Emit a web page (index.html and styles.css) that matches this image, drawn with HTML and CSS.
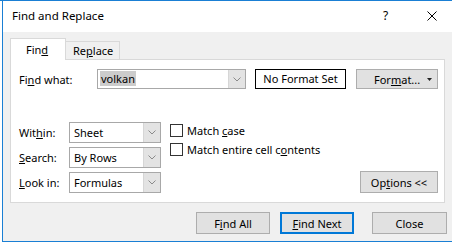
FILE: index.html
```html
<!DOCTYPE html>
<html lang="en">
<head>
  <meta charset="UTF-8">
  <title>Find and Replace</title>
  <link rel="stylesheet" href="styles.css">
</head>
<body>
  <div class="top-edge"></div>
  <div class="window">
    <div class="titlebar">
      <span class="title">Find and Replace</span>
      <span class="help">?</span>
      <svg class="close-x" width="10" height="10" viewBox="0 0 10 10">
        <path d="M0.5 0.5 L9.5 9.5 M9.5 0.5 L0.5 9.5" stroke="#000" stroke-width="1" fill="none"/>
      </svg>
    </div>

    <div class="dialog-body">
      <div class="tabs">
        <div class="tab active">Fin<u>d</u></div>
        <div class="tab">Re<u>p</u>lace</div>
      </div>

      <div class="panel">
        <div class="find-row">
          <span class="find-label">Fi<u>n</u>d what:</span>
          <div class="combo">
            <span class="combo-text"><span class="selected">volkan</span></span>
            <span class="drop">
              <svg width="8" height="5" viewBox="0 0 8 5"><path d="M0.5 0.5 L4 4 L7.5 0.5" stroke="#8a8a8a" fill="none"/></svg>
            </span>
          </div>
          <div class="no-format">No Format Set</div>
          <button type="button" class="btn format-btn">
            <span>For<u>m</u>at...</span>
            <svg class="caret" width="5" height="3" viewBox="0 0 5 3"><path d="M0 0 H5 L2.5 3 Z" fill="#222"/></svg>
          </button>
        </div>

        <div class="options">
          <div class="selects">
            <div class="sel-row">
              <span class="sel-label">Wit<u>h</u>in:</span>
              <div class="select"><span class="select-text">Sheet</span><span class="drop"><svg width="8" height="5" viewBox="0 0 8 5"><path d="M0.5 0.5 L4 4 L7.5 0.5" stroke="#8a8a8a" fill="none"/></svg></span></div>
            </div>
            <div class="sel-row">
              <span class="sel-label"><u>S</u>earch:</span>
              <div class="select"><span class="select-text">By Rows</span><span class="drop"><svg width="8" height="5" viewBox="0 0 8 5"><path d="M0.5 0.5 L4 4 L7.5 0.5" stroke="#8a8a8a" fill="none"/></svg></span></div>
            </div>
            <div class="sel-row">
              <span class="sel-label"><u>L</u>ook in:</span>
              <div class="select"><span class="select-text">Formulas</span><span class="drop"><svg width="8" height="5" viewBox="0 0 8 5"><path d="M0.5 0.5 L4 4 L7.5 0.5" stroke="#8a8a8a" fill="none"/></svg></span></div>
            </div>
          </div>

          <div class="checks">
            <div class="check"><span class="box"></span><span>Match <u>c</u>ase</span></div>
            <div class="check"><span class="box"></span><span>Match entire cell c<u>o</u>ntents</span></div>
          </div>

          <button type="button" class="btn options-btn">Op<u>t</u>ions &lt;&lt;</button>
        </div>
      </div>

      <div class="actions">
        <button type="button" class="btn find-all">F<u>i</u>nd All</button>
        <button type="button" class="btn find-next"><u>F</u>ind Next</button>
        <button type="button" class="btn close-btn">Close</button>
      </div>
    </div>
  </div>
</body>
</html>
```

FILE: styles.css
```css
* {
  margin: 0;
  padding: 0;
  box-sizing: border-box;
}

html, body {
  width: 452px;
  height: 243px;
  overflow: hidden;
  background: #fff;
  font-family: "Noto Sans", sans-serif;
  font-size: 11px;
  color: #000;
}

u {
  text-underline-offset: 1px;
}

.top-edge {
  height: 1px;
  background: #1a7fd4;
}

.window {
  margin-left: 2px;
  width: 450px;
  height: 241px;
  border-left: 1px solid #1a7fd4;
  border-bottom: 1px solid #1a7fd4;
  display: flex;
  flex-direction: column;
}

/* title bar */
.titlebar {
  height: 31px;
  flex: none;
  background: #fff;
  display: flex;
  align-items: center;
  padding-bottom: 2px;
}

.title {
  margin-left: 9px;
  font-size: 11.5px;
}

.help {
  margin-left: auto;
  width: 6px;
  margin-right: 38px;
  font-size: 12px;
}

.close-x {
  margin-right: 15px;
}

/* grey dialog area */
.dialog-body {
  flex: 1;
  background: #f0f0f0;
  padding: 6px 5px 0 7px;
}

.tabs {
  display: flex;
  align-items: flex-end;
  height: 21px;
}

.tab {
  height: 18px;
  padding: 2px 0 0 7px;
  width: 54px;
  line-height: 14px;
  border-top: 1px solid #d9d9d9;
  border-right: 1px solid #d9d9d9;
  background: #f0f0f0;
}

.tab.active {
  position: relative;
  z-index: 1;
  width: 56px;
  height: 22px;
  margin-bottom: -1px;
  padding: 4px 0 0 15px;
  border-left: 1px solid #d9d9d9;
  background: #fff;
}

.panel {
  width: 435px;
  height: 144px;
  background: #fff;
  border: 1px solid #d9d9d9;
  padding: 9px 6px 0 8px;
}

.find-row {
  display: flex;
  align-items: center;
  height: 20px;
}

.find-label {
  width: 78px;
}

.combo {
  width: 149px;
  height: 20px;
  border: 1px solid #a8a8a8;
  display: flex;
}

.combo-text {
  flex: 1;
  padding-left: 2px;
  line-height: 18px;
}

.selected {
  background: #cccccc;
  padding: 0 1px;
}

.drop {
  width: 17px;
  background: #e3e3e3;
  border-left: 1px solid #d6d6d6;
  display: flex;
  align-items: center;
  justify-content: center;
}

.no-format {
  margin-left: 9px;
  width: 91px;
  height: 20px;
  border: 1px solid #000;
  text-align: center;
  line-height: 18px;
}

.btn {
  font-family: "Noto Sans", sans-serif;
  font-size: 11px;
  color: #000;
  background: #e1e1e1;
  border: 1px solid #adadad;
}

.format-btn {
  margin-left: 10px;
  width: 82px;
  height: 20px;
  display: flex;
  align-items: center;
  padding: 0 5px 0 17px;
}

.caret {
  margin-left: auto;
}

/* lower options */
.options {
  display: flex;
  margin-top: 33px;
  height: 71px;
}

.selects {
  display: flex;
  flex-direction: column;
  gap: 4px;
}

.sel-row {
  display: flex;
  align-items: center;
  height: 21px;
}

.sel-label {
  width: 50px;
}

.select {
  width: 92px;
  height: 21px;
  border: 1px solid #a8a8a8;
  display: flex;
}

.select-text {
  flex: 1;
  padding-left: 4px;
  line-height: 19px;
}

.checks {
  margin-left: 9px;
  margin-top: -1px;
  display: flex;
  flex-direction: column;
}

.check {
  display: flex;
  align-items: center;
  height: 19px;
}

.box {
  width: 13px;
  height: 13px;
  border: 1px solid #333;
  background: #fff;
  margin-right: 4px;
}

.options-btn {
  margin-left: auto;
  align-self: flex-end;
  width: 78px;
  height: 22px;
}

/* bottom buttons */
.actions {
  display: flex;
  justify-content: flex-end;
  margin-top: 9px;
}

.actions .btn {
  height: 22px;
}

.find-all {
  width: 74px;
}

.find-next {
  width: 74px;
  margin-left: 10px;
  border: 2px solid #0078d7;
}

.close-btn {
  width: 75px;
  margin-left: 18px;
}
```
